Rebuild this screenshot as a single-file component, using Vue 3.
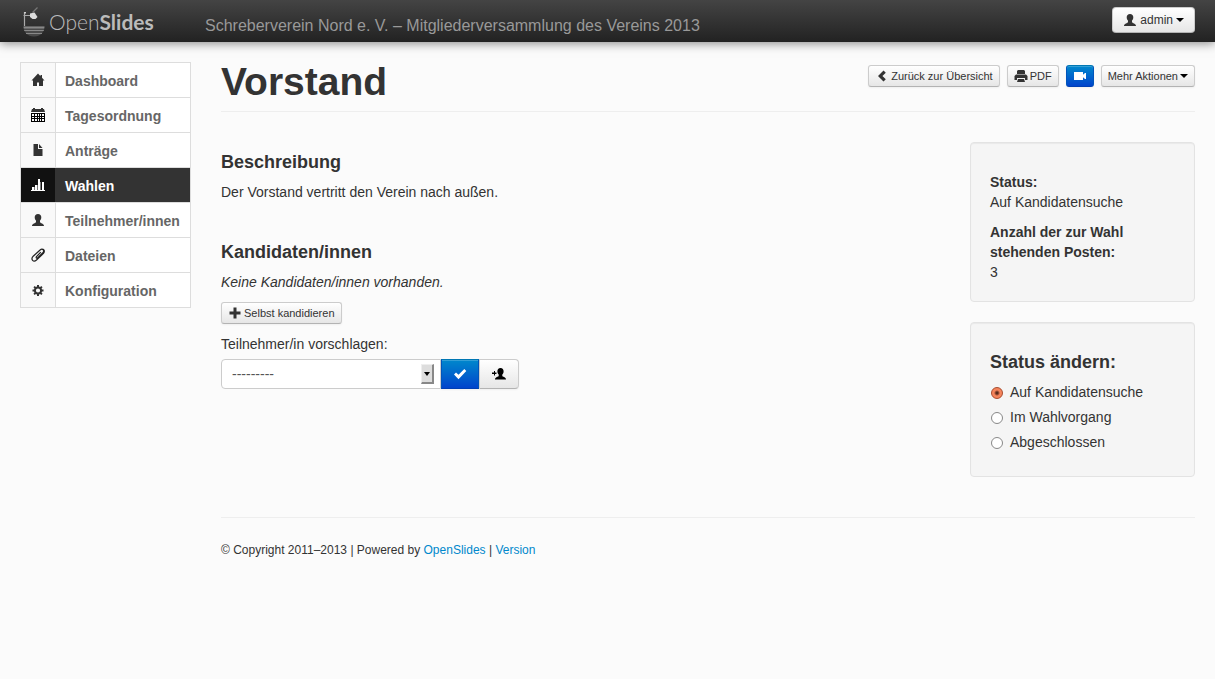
<script setup>
import { ref } from 'vue'

const navItems = [
  { label: 'Dashboard', icon: 'home' },
  { label: 'Tagesordnung', icon: 'calendar' },
  { label: 'Anträge', icon: 'file' },
  { label: 'Wahlen', icon: 'chart', active: true },
  { label: 'Teilnehmer/innen', icon: 'user' },
  { label: 'Dateien', icon: 'clip' },
  { label: 'Konfiguration', icon: 'gear' },
]

const statuses = ['Auf Kandidatensuche', 'Im Wahlvorgang', 'Abgeschlossen']
const status = ref(statuses[0])
const candidate = ref('')
</script>

<template>
  <header class="topbar">
    <a class="logo" href="#" aria-label="OpenSlides">
      <svg class="logo-mark" viewBox="0 0 22 31" aria-hidden="true">
        <path d="M9.500 6.500L14.500 1.500" stroke="#777" stroke-width="1.200" fill="none" />
        <path d="M1.500 6v14M.5 9.500h8" stroke="#aaa" stroke-width="1.200" fill="none" />
        <path d="M1 6h2v1.500H1z" fill="#ccc" />
        <path d="M7 7.500l4.500-1 3 4.500-2 2H9.500L7 11z" fill="#ddd" />
        <path d="M.5 20.500h21c0 5.500-4 10-10.500 10S.5 26 .5 20.500z" fill="#4a4a4a" />
        <path d="M.5 20.500h21l-.3 2H.8z" fill="#888" />
        <path d="M1.200 24.500h19.600M3 27.500h16" stroke="#888" stroke-width="1" />
      </svg>
      <span class="logo-text">Open<b>Slides</b></span>
    </a>
    <span class="event">Schreberverein Nord e. V. – Mitgliederversammlung des Vereins 2013</span>
    <button class="btn small" type="button">
      <svg class="icon" viewBox="0 0 14 14" aria-hidden="true"><path d="M7 1c2.100 0 3.300 1.300 3.300 3.300C10.300 6.200 9.500 7 9 7.700v1.600c.3.900 4 1.200 4 3.700H1c0-2.500 3.700-2.800 4-3.700V7.700c-.5-.7-1.300-1.500-1.300-3.400C3.700 2.300 4.900 1 7 1z" /></svg>
      admin
      <span class="caret"></span>
    </button>
  </header>

  <div class="page">
    <nav class="sidebar">
      <a v-for="item in navItems" :key="item.label" href="#" :class="['nav-item', { active: item.active }]">
        <span class="nav-icon">
          <svg class="icon" viewBox="0 0 14 14" aria-hidden="true">
            <path v-if="item.icon === 'home'" d="M7 .5L.5 7.500H2V13h4V9.500h2V13h4V7.500h1.500L11 4.800V2H9.500v1.200z" />
            <g v-else-if="item.icon === 'calendar'" fill="#000">
              <path d="M1 1h1V0h2v1h6V0h2v1h1l1 3H0z" fill="#333" />
              <path fill-rule="evenodd" d="M0 5h14v9H0zM1 6v2h2V6zM4 6v2h2V6zM7 6v2h1V6zM9 6v2h1V6zM11 6v2h2V6zM1 9v1h2V9zM4 9v1h2V9zM7 9v1h1V9zM9 9v1h1V9zM11 9v1h2V9zM1 11v2h2v-2zM4 11v2h2v-2zM7 11v2h1v-2zM9 11v2h1v-2zM11 11v2h2v-2z" />
            </g>
            <path v-else-if="item.icon === 'file'" d="M2.500 1H7v5h4.500v7h-9zM8 1l3.500 4H8z" />
            <g v-else-if="item.icon === 'chart'">
              <path d="M0 12h14v1H0zM1 9h2v3H1zM4 7h2v5H4zM7 1h2v11H7zM11 4h2v8h-2z" />
              <path d="M3 9h1v3H3zM6 7h1v5H6zM9 4h1v8H9z" opacity=".45" />
            </g>
            <path v-else-if="item.icon === 'user'" d="M7 1c2.100 0 3.300 1.300 3.300 3.300C10.300 6.200 9.500 7 9 7.700v1.600c.3.900 4 1.200 4 3.700H1c0-2.500 3.700-2.800 4-3.700V7.700c-.5-.7-1.300-1.500-1.300-3.400C3.700 2.300 4.900 1 7 1z" />
            <path v-else-if="item.icon === 'clip'" fill="none" stroke="#222" stroke-width="1.200" d="M9.800 4.200L5.500 8.600c-1 1.200.3 2.200 1.300 1.100l5-5c2.200-2.400-.5-4.700-2.700-2.700L2.200 8.200C-.8 11.600 2.500 14.600 5.500 12l7-6.600c1.500-1.900.8-3.800-.8-4.300" />
            <path v-else fill-rule="evenodd" d="M6 2h2v1.500l1.200.4 1-1 1.400 1.400-1 1 .4 1.200H12.500v2H11l-.4 1.200 1 1-1.400 1.400-1-1-1.200.4V13H6v-1.500l-1.200-.4-1 1-1.400-1.400 1-1L3 8.500H1.500v-2H3l.4-1.200-1-1 1.400-1.400 1 1L6 3.500zM7 5.400a2.100 2.100 0 1 0 0 4.200 2.100 2.100 0 0 0 0-4.200z" />
          </svg>
        </span>
        <span class="nav-label">{{ item.label }}</span>
      </a>
    </nav>

    <div class="content">
      <div class="page-head">
        <h1>Vorstand</h1>
        <div class="actions">
          <button class="btn mini" type="button">
            <svg class="icon" viewBox="0 0 14 14" aria-hidden="true"><path d="M8.500 1.500l2.300 2.200L7.400 7l3.400 3.300-2.300 2.200L3 7z" /></svg>
            <span>Zurück zur Übersicht</span>
          </button>
          <button class="btn mini" type="button">
            <svg class="icon" viewBox="0 0 14 14" aria-hidden="true"><path fill-rule="evenodd" d="M4 1h6l1 1v3H3V2zM2 5.500h10L13.500 7v4H11V9H3v2H.5V7zM4 10h6l1 3H3z" /></svg>
            PDF
          </button>
          <button class="btn mini primary" type="button" aria-label="Projektor">
            <svg class="icon" viewBox="0 0 14 14" aria-hidden="true"><path d="M1 3h9v2.800L12 4h1v6h-1l-2-1.800V11H1z" /></svg>
          </button>
          <button class="btn mini" type="button">Mehr Aktionen <span class="caret"></span></button>
        </div>
      </div>

      <div class="columns">
        <main class="main">
          <section>
            <h2>Beschreibung</h2>
            <p>Der Vorstand vertritt den Verein nach außen.</p>
          </section>
          <section>
            <h2>Kandidaten/innen</h2>
            <p><i>Keine Kandidaten/innen vorhanden.</i></p>
            <button class="btn mini" type="button">
              <svg class="icon" viewBox="0 0 14 14" aria-hidden="true"><path d="M5.500 1.500h3v4h4v3h-4v4h-3v-4h-4v-3h4z" /></svg>
              <span>Selbst kandidieren</span>
            </button>
            <label class="field-label" for="candidate">Teilnehmer/in vorschlagen:</label>
            <div class="group">
              <div class="select-wrap">
                <select id="candidate" v-model="candidate">
                  <option value="">---------</option>
                </select>
                <span class="select-arrow"></span>
              </div>
              <button class="btn primary" type="button" aria-label="Vorschlagen">
                <svg class="icon" viewBox="0 0 14 14" aria-hidden="true"><path d="M1 7.500l2-2 2.500 2.300L11.300 2l2 2-7.800 8.200z" /></svg>
              </button>
              <button class="btn" type="button" aria-label="Neuer Teilnehmer">
                <svg class="icon" viewBox="0 0 14 14" aria-hidden="true"><path fill="#000" d="M8.500 1c2.100 0 3.100 1.300 3.100 3.300 0 1.700-.6 2.600-1.300 3.300v1.500c0 .7 3.700 1 3.700 3.400H3c0-2.400 3.700-2.700 3.700-3.400V7.600c-.7-.7-1.300-1.600-1.300-3.300C5.400 2.300 6.400 1 8.500 1zM2 4h1v1.500h1.500v1.500H3v1.500H2V7H0V5.500h2z" /></svg>
              </button>
            </div>
          </section>
        </main>

        <aside class="side">
          <div class="well">
            <p><b>Status:</b><br />Auf Kandidatensuche</p>
            <p><b>Anzahl der zur Wahl stehenden Posten:</b><br />3</p>
          </div>
          <div class="well">
            <h2>Status ändern:</h2>
            <label v-for="s in statuses" :key="s" class="radio">
              <input v-model="status" type="radio" name="status" :value="s" />
              {{ s }}
            </label>
          </div>
        </aside>
      </div>

      <footer class="footer">
        © Copyright 2011–2013 | Powered by <a href="#">OpenSlides</a> | <a href="#">Version</a>
      </footer>
    </div>
  </div>
</template>

<style>
body {
  background: #fbfbfb;
}
</style>

<style scoped>
.topbar,
.page {
  box-sizing: border-box;
  font: 14px/20px "Liberation Sans", Arial, sans-serif;
  color: #333;
}
.topbar {
  display: flex;
  align-items: center;
  height: 42px;
  padding: 0 20px 2px;
  background: linear-gradient(#444, #222);
  box-shadow: 0 1px 10px rgba(0, 0, 0, 0.5);
}
.logo {
  display: flex;
  align-items: center;
  gap: 4px;
  width: 185px;
  padding: 2px 0 0 3px;
  box-sizing: border-box;
  color: #bbb;
  text-decoration: none;
}
.logo-mark {
  width: 22px;
  height: 31px;
}
.logo-text {
  padding-top: 2px;
  font: 300 21px/24px Lato, sans-serif;
}
.logo-text b {
  font-weight: 700;
}
.event {
  flex: 1;
  padding-top: 12px;
  font-size: 16px;
  color: #999;
}
.icon {
  width: 14px;
  height: 14px;
  fill: currentColor;
  flex: none;
}
.btn {
  display: inline-flex;
  align-items: center;
  justify-content: center;
  gap: 3px;
  box-sizing: border-box;
  height: 30px;
  padding: 0 12px;
  border: 1px solid #ccc;
  border-bottom-color: #b3b3b3;
  border-radius: 4px;
  background: linear-gradient(#fff, #e6e6e6);
  box-shadow: inset 0 1px 0 rgba(255, 255, 255, 0.2), 0 1px 2px rgba(0, 0, 0, 0.05);
  font-family: inherit;
  font-size: 14px;
  line-height: 20px;
  color: #333;
  white-space: nowrap;
}
.btn.small {
  height: 26px;
  padding: 0 10px;
  font-size: 12px;
}
.btn.mini {
  gap: 2px;
  height: 22px;
  padding: 0 6px;
  border-radius: 3px;
  font-size: 11px;
}
.btn.primary {
  border-color: #0077b3 #0055bb #003fb3;
  background: linear-gradient(#08c, #04c);
  color: #fff;
}
.caret {
  border: 4px solid transparent;
  border-top-color: #000;
  border-bottom: 0;
}
.page {
  display: flex;
  align-items: flex-start;
  gap: 30px;
  padding: 20px;
}
.sidebar {
  flex: none;
  width: 171px;
  box-sizing: border-box;
  border: 1px solid #ddd;
  border-bottom: 0;
}
.nav-item {
  display: flex;
  height: 34px;
  border-bottom: 1px solid #ddd;
  background: #fff;
  color: #666;
  font-weight: bold;
  line-height: 36px;
  text-decoration: none;
}
.nav-icon {
  display: flex;
  align-items: center;
  justify-content: center;
  width: 34px;
  border-right: 1px solid #ddd;
  background: #f9f9f9;
  color: #333;
}
.nav-label {
  padding-left: 9px;
}
.nav-item.active {
  background: #333;
  color: #fff;
}
.active .nav-icon {
  border-color: #333;
  background: #111;
  color: #fff;
}
.content {
  flex: 1;
  min-width: 0;
}
.page-head {
  display: flex;
  justify-content: space-between;
  align-items: flex-start;
  padding-bottom: 9px;
  margin-bottom: 30px;
  border-bottom: 1px solid #eee;
}
h1 {
  margin: 0;
  font-size: 39px;
  line-height: 40px;
}
.actions {
  display: flex;
  gap: 7px;
  padding-top: 3px;
}
h2 {
  margin: 10px 0;
  font-size: 18px;
  line-height: 20px;
}
p {
  margin: 0 0 10px;
}
.columns {
  display: flex;
  gap: 30px;
  align-items: flex-start;
}
.main {
  flex: 1;
  padding-top: 10px;
}
.main h2 {
  margin-top: 0;
}
.main section + section {
  padding-top: 30px;
}
.field-label {
  display: block;
  margin: 9px 0 5px;
}
.group {
  display: flex;
}
.select-wrap {
  position: relative;
}
.group select {
  appearance: none;
  display: block;
  box-sizing: border-box;
  width: 220px;
  height: 30px;
  padding: 0 10px;
  border: 1px solid #ccc;
  border-radius: 4px 0 0 4px;
  background: #fff;
  font: inherit;
  color: #555;
}
.select-arrow {
  position: absolute;
  top: 5px;
  right: 7px;
  display: grid;
  place-items: center;
  box-sizing: border-box;
  width: 13px;
  height: 20px;
  border: 1px solid #eee;
  border-right: 2px solid #888;
  border-bottom: 2px solid #888;
  background: #ddd;
  pointer-events: none;
}
.select-arrow::after {
  content: "";
  border: 3px solid transparent;
  border-top: 4px solid #000;
  border-bottom: 0;
}
.group .btn {
  border-radius: 0 4px 4px 0;
}
.group .primary {
  padding: 0 11px;
  border-radius: 0;
}
.side {
  width: 225px;
}
.well {
  padding: 19px 19px 9px;
  margin-bottom: 20px;
  border: 1px solid #e3e3e3;
  border-radius: 4px;
  background: #f5f5f5;
  box-shadow: inset 0 1px 1px rgba(0, 0, 0, 0.05);
}
.well p:first-child {
  margin-top: 10px;
}
.well + .well {
  padding-bottom: 19px;
}
.radio {
  display: flex;
  align-items: center;
  gap: 6px;
  margin-bottom: 5px;
}
.radio input {
  appearance: none;
  box-sizing: border-box;
  width: 12px;
  height: 12px;
  margin: 2px 1px 0;
  border: 1px solid #888;
  border-radius: 50%;
  background: #fff;
}
.radio input:checked {
  border-color: #a84a2c;
  background: radial-gradient(circle, #5b2b1c 0 1px, #f5845c 3px);
}
.footer {
  margin-top: 20px;
  padding-top: 22px;
  border-top: 1px solid #eee;
  font-size: 12px;
}
.footer a {
  color: #08c;
  text-decoration: none;
}
</style>
